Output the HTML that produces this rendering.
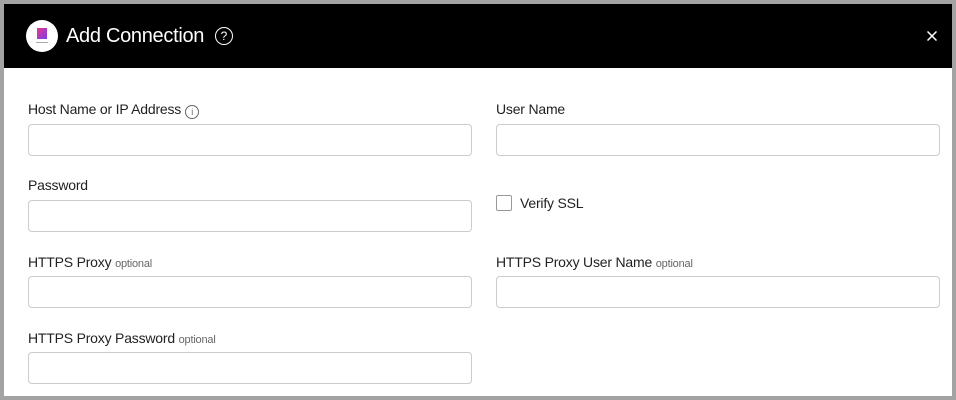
<!DOCTYPE html>
<html><head><style>
*{box-sizing:border-box;margin:0;padding:0}
body{width:956px;height:400px;background:#a3a3a3;font-family:"Liberation Sans",sans-serif;position:relative;overflow:hidden}
.win{position:absolute;left:4px;top:4px;width:948px;height:392px;background:#fff}
.hdr{position:absolute;left:0;top:0;width:948px;height:64px;background:#000}
.logo{position:absolute;left:22px;top:16px;width:32px;height:32px;border-radius:50%;background:#fff}
.logo i{position:absolute;left:11px;top:8px;width:10px;height:11px;background:linear-gradient(135deg,#e8368f,#7b3fe4)}
.logo b{position:absolute;left:10px;top:22px;width:12px;height:1px;background:#aaa}
.title{position:absolute;left:62px;top:21px;color:#fff;font-size:20px;letter-spacing:-0.3px}
.q{position:absolute;left:211px;top:23px;width:18px;height:18px;border:1.3px solid #fff;border-radius:50%;color:#fff;font-size:12px;text-align:center;line-height:16px}
.lbl{position:absolute;font-size:14px;color:#222;letter-spacing:-0.2px}
.lbl small{font-size:11px;color:#666}
.in{position:absolute;width:444px;height:32px;border:1px solid #ccc;border-radius:4px}
.info{display:inline-block;width:14px;height:14px;border:1px solid #666;border-radius:50%;font-size:9px;text-align:center;line-height:12px;color:#666;vertical-align:-1px;margin-left:4px}
.cb{position:absolute;left:492px;top:191px;width:16px;height:16px;border:1px solid #999;border-radius:2px}
</style></head><body>
<div class="win">
<div class="hdr"><div class="logo"><i></i><b></b></div><div class="title">Add Connection</div><div class="q">?</div>
<svg style="position:absolute;left:923px;top:27px" width="10" height="10" viewBox="0 0 10 10"><path d="M0.5 0.5L9.5 9.5M9.5 0.5L0.5 9.5" stroke="#fff" stroke-width="1.5"/></svg></div>
<div class="lbl" style="left:24px;top:97px">Host Name or IP Address<span class="info">i</span></div>
<div class="in" style="left:24px;top:120px"></div>
<div class="lbl" style="left:492px;top:97px">User Name</div>
<div class="in" style="left:492px;top:120px"></div>
<div class="lbl" style="left:24px;top:173px">Password</div>
<div class="in" style="left:24px;top:196px"></div>
<div class="cb"></div>
<div class="lbl" style="left:516px;top:191px">Verify SSL</div>
<div class="lbl" style="left:24px;top:250px">HTTPS Proxy <small>optional</small></div>
<div class="in" style="left:24px;top:272px"></div>
<div class="lbl" style="left:492px;top:250px">HTTPS Proxy User Name <small>optional</small></div>
<div class="in" style="left:492px;top:272px"></div>
<div class="lbl" style="left:24px;top:326px">HTTPS Proxy Password <small>optional</small></div>
<div class="in" style="left:24px;top:348px"></div>
</div>
</body></html>
